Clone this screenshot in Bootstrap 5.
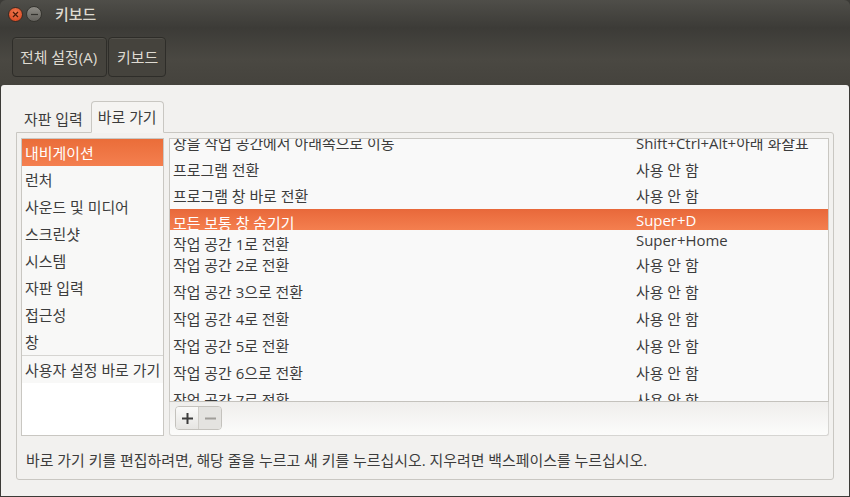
<!DOCTYPE html>
<html lang="ko"><head><meta charset="utf-8"><title>키보드</title>
<link href="https://cdn.jsdelivr.net/npm/bootstrap@5.3.0/dist/css/bootstrap.min.css" rel="stylesheet">
<style>
html,body{margin:0;height:497px;overflow:hidden;background:#3c3b37}
body{font-family:"Open Sans","Noto Sans CJK KR",sans-serif;font-size:14.93px;line-height:20px;color:#3c3c3c}
.wm{width:850px;height:497px;display:flex;flex-direction:column}
.ttl{height:28px;flex:none;background:linear-gradient(#4f4e49,#3c3b37);border-radius:6px 6px 0 0;display:flex;align-items:center;padding-left:8px;color:#dfdbd2;font-weight:500}
.wb{width:15px;height:15px;border-radius:50%;display:flex;align-items:center;justify-content:center;flex:none}
.wb-c{background:radial-gradient(circle at 50% 35%,#f27a4f,#d6401a);border:1px solid #3a2a22}
.wb-m{width:16px;height:16px;background:linear-gradient(#8e8c86,#64625d);border:1px solid #35342f;margin-left:3px}
.ttl-t{margin-left:13px}
.tbar{height:57px;flex:none;background:linear-gradient(#3c3b37,#4a4842 55%,#45433d);padding:9px 12px 8px;display:flex;gap:1px}
.tb{height:40px;padding:0 7px;border:1px solid #2e2d29;border-radius:4px;background:#45433d;color:#dfdbd2;display:flex;align-items:center;white-space:nowrap;box-shadow:inset 0 1px 0 #53514b}
.tb1{width:95px}
.tb2{width:58px;padding:0 8px}
.body{flex:1;min-height:0;background:#f2f1ef;margin:0 1px 1px;border-radius:3px 3px 0 0;padding:15px 15px 16px;display:flex;flex-direction:column}
.tabs{height:33px;flex:none;display:flex;align-items:flex-end;margin-bottom:-1px;position:relative;z-index:1}
.tt{height:28px;padding:0 8px;display:flex;align-items:center;white-space:nowrap}
.tt-on{height:32px;background:#f5f4f2;border:1px solid #c9c7c2;border-bottom-color:#f5f4f2;border-radius:4px 4px 0 0;padding:0 6px;color:#3c3c3c}
.nb{flex:1;min-height:0;border:1px solid #c9c7c2;border-radius:0 3px 3px 3px;background:#f2f1ef;display:flex;flex-direction:column;padding:5px 4px 0 4px}
.main{height:298px;flex:none;display:flex;gap:5px}
.side{width:143px;flex:none;background:#fff;border:1px solid #c9c7c2}
.si{height:27px;padding-left:3px;display:flex;align-items:center;background:#f8f8f7;white-space:nowrap}
.si-on{background:linear-gradient(#ea6d39,#f47f4f);color:#fff}
.sep{height:1px;background:#d6d5d2}
.right{flex:1;min-width:0;display:flex;flex-direction:column}
.tbl{height:264px;flex:none;background:#f9f9f9;border:1px solid #c9c7c2;border-bottom-color:#c4c2bd;overflow:hidden}
.rows{margin-top:-10px}
.rw{height:27px;display:flex;align-items:center;padding-left:3px;white-space:nowrap}
.rw-a{width:463px;flex:none}
.rw-s{height:21px;background:linear-gradient(#e8683a,#f47f4f);color:#fff;overflow:hidden;align-items:flex-start;padding-top:1px}
.rw-s .rw-a{padding-top:3px}
.rw-h{height:21px;align-items:flex-start;padding-top:0}
.rw-h .rw-a{padding-top:4px}
.rw-26{height:26px}
.tools{height:34px;flex:none;background:linear-gradient(#efeeec,#fcfcfb);border:1px solid #d6d5d2;border-top:0;border-radius:0 0 3px 3px;padding:4px 5px;display:flex}
.tg{display:flex;height:24px;border:1px solid #c4c2bd;border-radius:4px;overflow:hidden;width:47px}
.tg span{flex:1;display:flex;align-items:center;justify-content:center}
.tg-a{background:linear-gradient(#fafaf9,#e6e5e2);border-right:1px solid #d0cec9}
.tg-b{background:#e4e3e0}
.hint{flex:1;padding:14px 0 0 5px;display:flex;align-items:flex-start;white-space:nowrap}
</style></head><body>
<div class="wm">
<div class="ttl">
<span class="wb wb-c"><svg width="7" height="7" viewBox="0 0 7 7"><path d="M1 1l5 5M6 1l-5 5" stroke="#4a1a08" stroke-width="1.2"/></svg></span>
<span class="wb wb-m"><svg width="7" height="7" viewBox="0 0 7 7"><path d="M0 3.5h7" stroke="#33322e" stroke-width="1.2"/></svg></span>
<span class="ttl-t">키보드</span></div>
<div class="tbar"><div class="tb tb1">전체 설정(A)</div><div class="tb tb2">키보드</div></div>
<div class="body">
<div class="tabs"><div class="tt">자판 입력</div><div class="tt tt-on">바로 가기</div></div>
<div class="nb">
<div class="main">
<div class="side">
<div class="si si-on">내비게이션</div><div class="si">런처</div><div class="si">사운드 및 미디어</div><div class="si">스크린샷</div><div class="si">시스템</div><div class="si">자판 입력</div><div class="si">접근성</div><div class="si">창</div>
<div class="sep"></div><div class="si">사용자 설정 바로 가기</div>
</div>
<div class="right">
<div class="tbl"><div class="rows">
<div class="rw"><span class="rw-a">창을 작업 공간에서 아래쪽으로 이동</span><span>Shift+Ctrl+Alt+아래 화살표</span></div>
<div class="rw"><span class="rw-a">프로그램 전환</span><span>사용 안 함</span></div>
<div class="rw rw-26"><span class="rw-a">프로그램 창 바로 전환</span><span>사용 안 함</span></div>
<div class="rw rw-s"><span class="rw-a">모든 보통 창 숨기기</span><span>Super+D</span></div>
<div class="rw rw-h"><span class="rw-a">작업 공간 1로 전환</span><span>Super+Home</span></div>
<div class="rw"><span class="rw-a">작업 공간 2로 전환</span><span>사용 안 함</span></div>
<div class="rw"><span class="rw-a">작업 공간 3으로 전환</span><span>사용 안 함</span></div>
<div class="rw"><span class="rw-a">작업 공간 4로 전환</span><span>사용 안 함</span></div>
<div class="rw"><span class="rw-a">작업 공간 5로 전환</span><span>사용 안 함</span></div>
<div class="rw"><span class="rw-a">작업 공간 6으로 전환</span><span>사용 안 함</span></div>
<div class="rw"><span class="rw-a">작업 공간 7로 전환</span><span>사용 안 함</span></div>
</div></div>
<div class="tools"><div class="tg"><span class="tg-a"><svg width="11" height="11" viewBox="0 0 11 11"><path d="M5.5 0v11M0 5.5h11" stroke="#3c3c3c" stroke-width="2"/></svg></span><span class="tg-b"><svg width="11" height="11" viewBox="0 0 11 11"><path d="M0 5.5h11" stroke="#a09e99" stroke-width="2"/></svg></span></div></div>
</div>
</div>
<div class="hint">바로 가기 키를 편집하려면, 해당 줄을 누르고 새 키를 누르십시오. 지우려면 백스페이스를 누르십시오.</div>
</div>
</div>
</div>
</body></html>
